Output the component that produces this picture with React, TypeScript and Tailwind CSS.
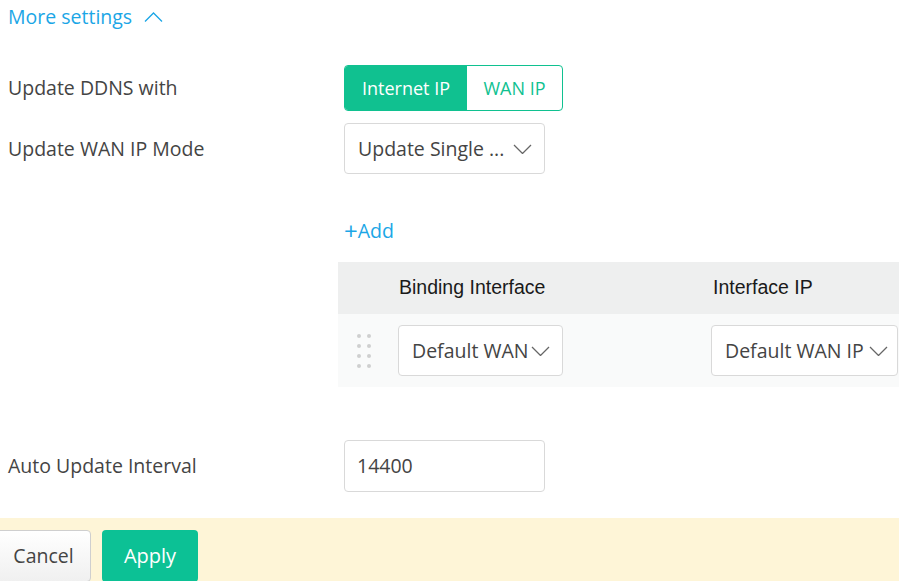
const font = { fontFamily: '"Open Sans", "Liberation Sans", sans-serif' };

function Chevron({ up = false, className = "" }: { up?: boolean; className?: string }) {
  return (
    <svg width="19" height="10" viewBox="0 0 19 10" className={className} fill="none">
      <polyline
        points={up ? "1,9.5 9.5,1 18,9.5" : "1,1 9.5,9.5 18,1"}
        stroke="currentColor"
        strokeWidth="1.3"
      />
    </svg>
  );
}

function Select({ label, className }: { label: string; className: string }) {
  return (
    <div
      className={`flex items-center justify-between rounded-[4px] border border-[#d9d9d9] bg-white text-[19.5px] text-[#444] ${className}`}
    >
      <span className="whitespace-nowrap">{label}</span>
      <Chevron className="text-[#666]" />
    </div>
  );
}

function DragHandle() {
  return (
    <div className="grid grid-cols-2 gap-x-[6px] gap-y-[6px]">
      {Array.from({ length: 8 }).map((_, i) => (
        <span key={i} className="block h-[4px] w-[4px] rounded-full bg-[#cfcfcf]" />
      ))}
    </div>
  );
}

export default function App() {
  return (
    <div className="flex h-[581px] w-[899px] flex-col overflow-hidden bg-white" style={font}>
      <div className="h-[7px] bg-[#f9f9f9]" />

      {/* settings form */}
      <div className="flex flex-col pl-[8px]">
        <div className="mt-[4px] flex h-[26px] items-center gap-[12px] text-[19.5px] text-[#1ba6e6]">
          <span>More settings</span>
          <Chevron up />
        </div>

        <div className="mt-[35px] flex items-center">
          <div className="w-[336px] text-[19.5px] text-[#444]">Update DDNS with</div>
          <div className="flex h-[46px] overflow-hidden rounded-[4px] border border-[#10c190] text-[18px]">
            <div className="flex w-[122px] items-center justify-center bg-[#10c190] text-white">Internet IP</div>
            <div className="flex w-[95px] items-center justify-center text-[#10c190]">WAN IP</div>
          </div>
        </div>

        <div className="mt-[12px] flex items-center">
          <div className="w-[336px] text-[19.5px] text-[#444]">Update WAN IP Mode</div>
          <Select label="Update Single ..." className="h-[51px] w-[201px] pl-[13px] pr-[12px]" />
        </div>

        <div className="mt-[44px] flex h-[26px] items-center pl-[336px] text-[19.5px] text-[#1ba6e6]">
          <span className="text-[24px] leading-none">+</span>
          <span>Add</span>
        </div>
      </div>

      {/* binding table */}
      <div className="ml-[338px] mt-[18px] flex flex-col">
        <div
          className="flex h-[52px] items-center bg-[#eeefef] text-[19.5px] text-[#1a1a1a]"
          style={{ fontFamily: '"Liberation Sans", Arial, sans-serif' }}
        >
          <div className="w-[61px]" />
          <div className="w-[314px]">Binding Interface</div>
          <div>Interface IP</div>
        </div>
        <div className="flex h-[73px] items-start bg-[#f9fafa] pt-[11px]">
          <div className="flex h-[51px] w-[60px] items-center pl-[19px]">
            <DragHandle />
          </div>
          <div className="w-[313px]">
            <Select label="Default WAN" className="h-[51px] w-[165px] pl-[13px] pr-[12px]" />
          </div>
          <Select label="Default WAN IP" className="h-[51px] w-[187px] pl-[13px] pr-[9px]" />
        </div>
      </div>

      <div className="mt-[53px] flex items-center pl-[8px]">
        <div className="w-[336px] text-[19.5px] text-[#444]">Auto Update Interval</div>
        <div className="flex h-[52px] w-[201px] items-center rounded-[4px] border border-[#d9d9d9] pl-[12px] text-[19.5px] text-[#444]">
          14400
        </div>
      </div>

      {/* footer actions */}
      <div className="mt-[26px] flex flex-1 items-start gap-[11px] bg-[#fef5d7] pt-[12px]">
        <button className="-ml-[6px] h-[52px] w-[97px] rounded-[4px] border border-[#cfcfcf] bg-gradient-to-b from-white to-[#f0f0f0] pl-[2px] text-[19.5px] text-[#444]">
          Cancel
        </button>
        <button className="h-[52px] w-[96px] rounded-[4px] bg-[#0cc195] text-[20px] text-white">Apply</button>
      </div>
    </div>
  );
}
